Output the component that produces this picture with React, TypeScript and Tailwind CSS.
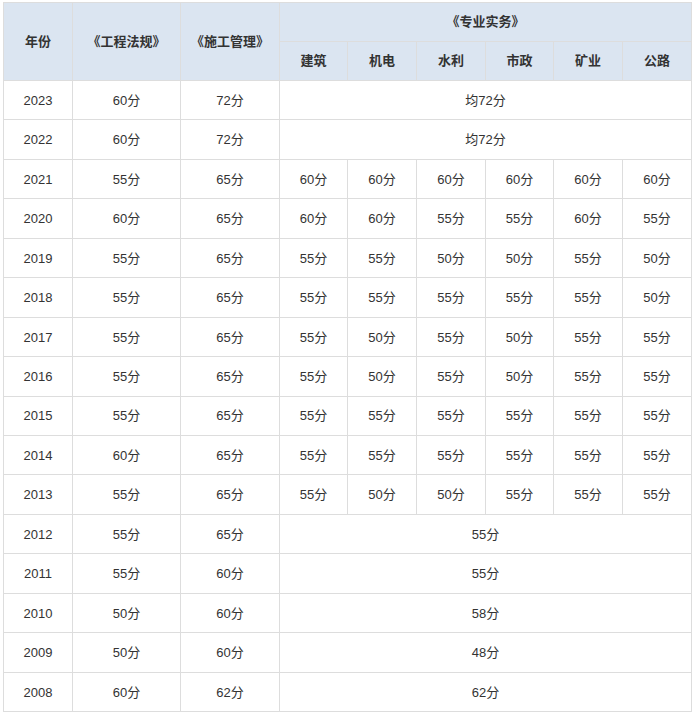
import React from "react";

type Row = { year: string; law: string; mgmt: string; pro: string[] | string };

const rows: Row[] = [
  { year: "2023", law: "60分", mgmt: "72分", pro: "均72分" },
  { year: "2022", law: "60分", mgmt: "72分", pro: "均72分" },
  { year: "2021", law: "55分", mgmt: "65分", pro: ["60分", "60分", "60分", "60分", "60分", "60分"] },
  { year: "2020", law: "60分", mgmt: "65分", pro: ["60分", "60分", "55分", "55分", "60分", "55分"] },
  { year: "2019", law: "55分", mgmt: "65分", pro: ["55分", "55分", "50分", "50分", "55分", "50分"] },
  { year: "2018", law: "55分", mgmt: "65分", pro: ["55分", "55分", "55分", "55分", "55分", "50分"] },
  { year: "2017", law: "55分", mgmt: "65分", pro: ["55分", "50分", "55分", "50分", "55分", "55分"] },
  { year: "2016", law: "55分", mgmt: "65分", pro: ["55分", "50分", "55分", "50分", "55分", "55分"] },
  { year: "2015", law: "55分", mgmt: "65分", pro: ["55分", "55分", "55分", "55分", "55分", "55分"] },
  { year: "2014", law: "60分", mgmt: "65分", pro: ["55分", "55分", "55分", "55分", "55分", "55分"] },
  { year: "2013", law: "55分", mgmt: "65分", pro: ["55分", "50分", "50分", "55分", "55分", "55分"] },
  { year: "2012", law: "55分", mgmt: "65分", pro: "55分" },
  { year: "2011", law: "55分", mgmt: "60分", pro: "55分" },
  { year: "2010", law: "50分", mgmt: "60分", pro: "58分" },
  { year: "2009", law: "50分", mgmt: "60分", pro: "48分" },
  { year: "2008", law: "60分", mgmt: "62分", pro: "62分" },
];

const subjects = ["建筑", "机电", "水利", "市政", "矿业", "公路"];

const cell = "border border-[#dddddd] text-center align-middle p-0";

export default function App() {
  return (
    <div
      className="bg-white w-[693px] h-[721px] pl-[3px] pt-[2px] text-[13px] text-[#333333]"
      style={{ fontFamily: '"Liberation Sans", "Noto Sans CJK SC", sans-serif' }}
    >
      <table className="table-fixed border-collapse w-[688px]">
        <colgroup>
          <col className="w-[69px]" />
          <col className="w-[108px]" />
          <col className="w-[99px]" />
          <col className="w-[68px]" />
          <col className="w-[69px]" />
          <col className="w-[69px]" />
          <col className="w-[68px]" />
          <col className="w-[69px]" />
          <col className="w-[69px]" />
        </colgroup>
        <thead className="bg-[#dbe5f1] font-bold">
          <tr className="h-[39px]">
            <th rowSpan={2} className={cell}>年份</th>
            <th rowSpan={2} className={cell}>《工程法规》</th>
            <th rowSpan={2} className={cell}>《施工管理》</th>
            <th colSpan={6} className={cell}>《专业实务》</th>
          </tr>
          <tr className="h-[39px]">
            {subjects.map((s) => (
              <th key={s} className={cell}>{s}</th>
            ))}
          </tr>
        </thead>
        <tbody>
          {rows.map((r) => (
            <tr key={r.year} className="h-[39.45px]">
              <td className={cell + " pt-[1px]"}>{r.year}</td>
              <td className={cell + " pt-[1px]"}>{r.law}</td>
              <td className={cell + " pt-[1px]"}>{r.mgmt}</td>
              {typeof r.pro === "string" ? (
                <td colSpan={6} className={cell + " pt-[1px]"}>{r.pro}</td>
              ) : (
                r.pro.map((p, i) => (
                  <td key={i} className={cell + " pt-[1px]"}>{p}</td>
                ))
              )}
            </tr>
          ))}
        </tbody>
      </table>
    </div>
  );
}
